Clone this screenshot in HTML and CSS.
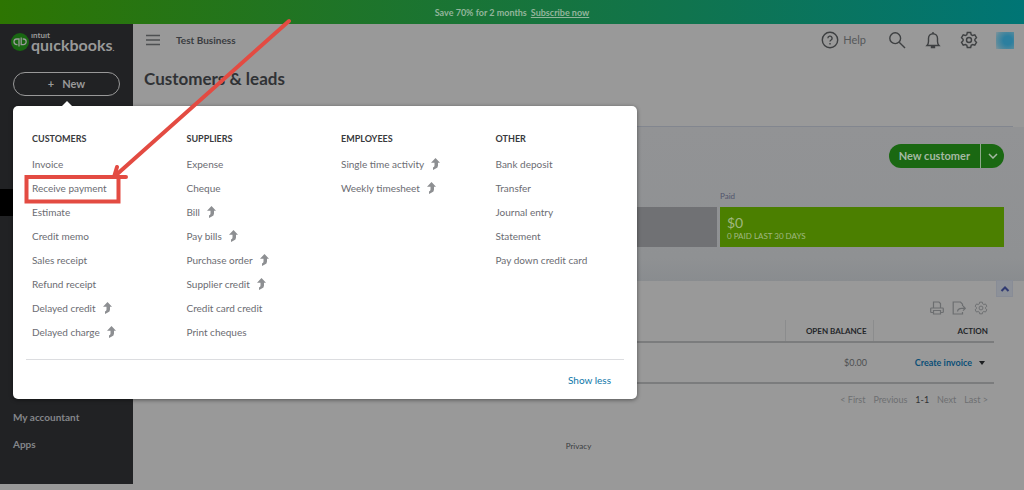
FILE: index.html
```html
<!DOCTYPE html>
<html lang="en">
<head>
<meta charset="utf-8">
<title>Customers &amp; leads</title>
<link rel="stylesheet" href="styles.css">
</head>
<body>
<svg class="defs" aria-hidden="true">
  <symbol id="upgrade" viewBox="0 0 10 12">
    <path d="M5.500 0 10 4.800H8v2.700q0 2.300-2.200 3L3 12V9.500q1.500-.6 1.500-2V4.800H1z"/>
  </symbol>
  <symbol id="gear" viewBox="0 0 18 18">
    <path d="M7.300 1.500h3.400l.5 2.200 1.400.8 2.200-.7 1.700 2.900L14.900 8.200v1.600l1.600 1.500-1.700 2.900-2.200-.7-1.400.8-.5 2.200H7.300l-.5-2.200-1.400-.8-2.200.7-1.700-2.900 1.600-1.500V8.200L1.500 6.700l1.700-2.900 2.200.7 1.400-.8z"/>
    <circle cx="9" cy="9" r="2.500"/>
  </symbol>
</svg>
<div class="promo"><span>Save 70% for 2 months</span><a href="#">Subscribe now</a></div>
<div class="app">
  <aside class="sidebar">
    <div class="brand">
      <svg class="brand-mark" viewBox="0 0 18 18" aria-hidden="true">
        <circle cx="9" cy="9" r="9" fill="#196712"/>
        <g fill="none" stroke="#999" stroke-width="1.300">
          <path d="M8 13.500V6H5.800a2.800 2.800 0 0 0 0 5.600h.7"/>
          <path d="M10.200 4.500v7.100h2.200a2.800 2.800 0 0 0 0-5.600h-.7"/>
        </g>
      </svg>
      <div class="brand-name"><span class="brand-top">ıntuıt</span><span class="brand-main">quıckbooks<i>.</i></span></div>
    </div>
    <button class="new-button" type="button"><span class="plus">+</span>New</button>
    <nav class="nav">
      <span class="nav-active"></span>
      <a href="#">My accountant</a>
      <a href="#">Apps</a>
    </nav>
  </aside>
  <main class="main">
    <header class="topbar">
      <button class="icon-button" type="button" aria-label="Menu">
        <svg class="burger" viewBox="0 0 14 12"><path d="M0 1.500h14M0 6h14M0 10.500h14"/></svg>
      </button>
      <span class="company">Test Business</span>
      <div class="tools">
        <button class="icon-button help" type="button">
          <svg class="tool-icon" viewBox="0 0 18 18"><circle cx="9" cy="9" r="7.700"/><path d="M6.900 7.300a2.100 2.100 0 1 1 3.200 1.700c-.8.5-1.100.8-1.100 1.600"/><path d="M9 12v1.400"/></svg>
          Help
        </button>
        <button class="icon-button" type="button" aria-label="Search">
          <svg class="tool-icon" viewBox="0 0 18 18"><circle cx="7.200" cy="7.200" r="5.400"/><path d="m11.200 11.200 5.800 5.800"/></svg>
        </button>
        <button class="icon-button" type="button" aria-label="Notifications">
          <svg class="tool-icon" viewBox="0 0 18 18"><path d="M3 14.500h12c-1.300-1.300-1.500-2.200-1.500-4V7.300a4.500 4.500 0 0 0-9 0v3.200c0 1.800-.2 2.700-1.500 4zM9 1v2M7.500 15.500h3v1h-3z"/></svg>
        </button>
        <button class="icon-button" type="button" aria-label="Settings">
          <svg class="tool-icon"><use href="#gear"/></svg>
        </button>
        <span class="avatar"></span>
      </div>
    </header>
    <h1 class="title">Customers &amp; leads</h1>
    <section class="summary">
      <div class="summary-actions">
        <div class="split">
          <button class="split-main" type="button">New customer</button>
          <button class="split-more" type="button" aria-label="More options"><svg viewBox="0 0 10 6"><path d="m1 1 4 4 4-4"/></svg></button>
        </div>
      </div>
      <div class="money">
        <div class="open"><div class="bar"></div></div>
        <div class="paid">
          <div class="money-label">Paid</div>
          <div class="bar bar-paid"><strong>$0</strong><span>0 PAID LAST 30 DAYS</span></div>
        </div>
      </div>
      <button class="collapse" type="button" aria-label="Collapse"><svg viewBox="0 0 10 6"><path d="m1.500 5 3.500-3.500L8.500 5"/></svg></button>
    </section>
    <section class="list">
      <div class="list-tools">
        <button class="icon-button" type="button" aria-label="Print"><svg class="list-icon" viewBox="0 0 14 14"><path d="M3.500 7V1h5.500l1.500 1.500V7M3 11.500H1.500q-.8 0-.8-.8V7.800q0-.8.8-.8h11q.8 0 .8.800v2.900q0 .8-.8.8H11M3.500 9.500h7V13h-7z"/></svg></button>
        <button class="icon-button" type="button" aria-label="Export"><svg class="list-icon" viewBox="0 0 14 14"><path d="M10.500 5V3.200L8.500 1H1.200v12h9.300v-2M5.500 10.500c.3-2.300 1.500-3.200 4-3.200h3.500M11 5l2.300 2.300L11 9.600"/></svg></button>
        <button class="icon-button" type="button" aria-label="Table settings"><svg class="list-icon"><use href="#gear"/></svg></button>
      </div>
      <table class="table">
        <thead><tr><th></th><th class="col-balance">OPEN BALANCE</th><th class="col-action">ACTION</th></tr></thead>
        <tbody><tr><td></td><td class="amount">$0.00</td><td><div class="action"><a href="#">Create invoice</a><button class="icon-button caret" type="button" aria-label="More actions"></button></div></td></tr></tbody>
      </table>
      <div class="pager"><span>&lt; First</span><span>Previous</span><span class="current">1-1</span><span>Next</span><span>Last &gt;</span></div>
    </section>
    <footer class="footer"><a href="#">Privacy</a></footer>
  </main>
</div>
<div class="menu">
  <div class="columns">
    <section>
      <h2>CUSTOMERS</h2>
      <ul>
        <li><a href="#">Invoice</a></li>
        <li><a href="#">Receive payment</a></li>
        <li><a href="#">Estimate</a></li>
        <li><a href="#">Credit memo</a></li>
        <li><a href="#">Sales receipt</a></li>
        <li><a href="#">Refund receipt</a></li>
        <li><a href="#">Delayed credit</a><svg><use href="#upgrade"/></svg></li>
        <li><a href="#">Delayed charge</a><svg><use href="#upgrade"/></svg></li>
      </ul>
    </section>
    <section>
      <h2>SUPPLIERS</h2>
      <ul>
        <li><a href="#">Expense</a></li>
        <li><a href="#">Cheque</a></li>
        <li><a href="#">Bill</a><svg><use href="#upgrade"/></svg></li>
        <li><a href="#">Pay bills</a><svg><use href="#upgrade"/></svg></li>
        <li><a href="#">Purchase order</a><svg><use href="#upgrade"/></svg></li>
        <li><a href="#">Supplier credit</a><svg><use href="#upgrade"/></svg></li>
        <li><a href="#">Credit card credit</a></li>
        <li><a href="#">Print cheques</a></li>
      </ul>
    </section>
    <section>
      <h2>EMPLOYEES</h2>
      <ul>
        <li><a href="#">Single time activity</a><svg><use href="#upgrade"/></svg></li>
        <li><a href="#">Weekly timesheet</a><svg><use href="#upgrade"/></svg></li>
      </ul>
    </section>
    <section>
      <h2>OTHER</h2>
      <ul>
        <li><a href="#">Bank deposit</a></li>
        <li><a href="#">Transfer</a></li>
        <li><a href="#">Journal entry</a></li>
        <li><a href="#">Statement</a></li>
        <li><a href="#">Pay down credit card</a></li>
      </ul>
    </section>
  </div>
  <div class="menu-foot"><button type="button">Show less</button></div>
</div>
<svg class="callout" viewBox="0 0 300 210" aria-hidden="true">
  <path d="M26.500 177h92v24.500h-92z"/>
  <path d="M289 21 115 176M117 167l-3 10h12" stroke-linecap="round" stroke-linejoin="round"/>
</svg>
</body>
</html>
```

FILE: styles.css
```css
* { box-sizing: border-box; }
body {
  margin: 0;
  min-height: 100vh;
  display: flex;
  flex-direction: column;
  position: relative;
  background: #999;
  color: #3a3c3f;
  font-family: Lato, "Noto Sans", sans-serif;
  font-size: 10px;
  line-height: 12px;
}
a { color: inherit; text-decoration: none; }
button { font: inherit; color: inherit; border: 0; padding: 0; background: none; }
svg { display: block; }
h1, h2, ul { margin: 0; padding: 0; }
.defs { position: absolute; width: 0; height: 0; }

.promo {
  height: 24px;
  display: flex;
  align-items: center;
  justify-content: center;
  gap: 4px;
  padding-top: 2px;
  background: linear-gradient(90deg, #2d7502, #10744e 67%, #007575);
  color: #93b59c;
  font-size: 9px;
  font-weight: 700;
}
.promo a { text-decoration: underline; }

.app { flex: 1; display: flex; }
.sidebar {
  width: 133px;
  margin-bottom: 6px;
  background: #212224;
  color: #84868a;
  display: flex;
  flex-direction: column;
}
.brand { display: flex; align-items: center; gap: 2px; height: 36px; padding-left: 11px; }
.brand-mark { width: 18px; height: 18px; }
.brand-name { color: #999; font-weight: 700; display: flex; flex-direction: column; }
.brand-top { font-size: 8px; line-height: 8px; }
.brand-main { font-size: 16px; line-height: 12px; }
.brand-main i { font-size: 8px; font-style: normal; }
.new-button {
  margin: 12px 13px 0;
  height: 24px;
  border: 1px solid #999;
  border-radius: 12px;
  color: #999;
  font-size: 11px;
  font-weight: 700;
}
.plus { margin-right: 8px; }
.nav { margin-top: 93px; display: flex; flex-direction: column; font-weight: 700; }
.nav-active { height: 27px; margin-bottom: 188px; background: #000; }
.nav a { padding: 7px 13px 8px; }

.main { flex: 1; min-width: 0; display: flex; flex-direction: column; }
.topbar { display: flex; align-items: center; height: 32px; padding: 0 10px 0 13px; }
.icon-button { display: flex; align-items: center; }
.burger { width: 14px; height: 12px; fill: none; stroke: #4e5052; stroke-width: 1.5; }
.company { margin-left: 16px; font-weight: 700; }
.tools { margin-left: auto; display: flex; align-items: center; gap: 18px; color: #55585a; }
.tool-icon { width: 18px; height: 18px; fill: none; stroke: #3e4042; stroke-width: 1.4; }
.help { gap: 4px; font-size: 11px; margin-right: 4px; }
.avatar { width: 18px; height: 17px; background: radial-gradient(circle at 65% 50%, #2c7f9f 30%, #5b8b9c 75%, #83939a); }
.title { margin: 12px 11px 0; height: 59px; font-size: 17px; line-height: 22px; border-bottom: 1px solid #82868f; color: #303235; }

.summary { position: relative; height: 154px; padding: 17px 20px 34px 11px; background: linear-gradient(#929395, #8f9193 85%, #898c8f); }
.summary-actions { display: flex; justify-content: flex-end; }
.split { display: flex; height: 24px; border-radius: 12px; overflow: hidden; background: #1a6812; color: #a5b9a3; }
.split-main { padding: 0 10px; font-size: 11px; font-weight: 700; }
.split-more { width: 24px; border-left: 1px solid #8ea98b; display: grid; place-items: center; }
.split-more svg { width: 10px; height: 6px; fill: none; stroke: #a5b9a3; stroke-width: 1.5; }
.money { display: grid; grid-template-columns: 573fr 284fr; gap: 3px; align-items: end; margin-top: 22px; }
.money-label { color: #51556d; font-size: 8px; margin-bottom: 5px; }
.bar { height: 40px; background: #707174; }
.bar-paid { background: #4b7f00; padding: 7px; color: #a0b880; display: flex; flex-direction: column; }
.bar-paid strong { font-size: 14px; line-height: 17px; font-weight: 400; }
.bar-paid span { font-size: 8px; line-height: 10px; }
.collapse { position: absolute; right: 11px; bottom: -16px; width: 17px; height: 17px; display: grid; place-items: center; background: #8d9199; border: 1px solid #888c96; }
.collapse svg { width: 10px; height: 6px; fill: none; stroke: #303a72; stroke-width: 2; }

.list { padding: 20px 30px 0 11px; }
.list-tools { display: flex; justify-content: flex-end; gap: 8px; padding-right: 6px; }
.list-icon { width: 14px; height: 14px; fill: none; stroke: #6c6e70; stroke-width: 1.2; }
.table { width: 100%; border-collapse: collapse; margin-top: 5px; table-layout: fixed; }
.table th { height: 22px; padding: 0 6px; text-align: right; font-size: 8px; color: #242629; border-bottom: 2px solid #7b7c7d; }
.table .col-balance { width: 88px; border-left: 1px solid #8b8c8d; border-right: 1px solid #8b8c8d; white-space: nowrap; }
.col-action { width: 121px; }
.table td { height: 41px; padding: 0 6px; border-bottom: 2px solid #7b7c7d; }
.table .amount { text-align: right; color: #4d4f51; font-size: 9px; }
.action { display: flex; align-items: center; justify-content: flex-end; gap: 7px; padding-right: 3px; color: #0b4f77; font-size: 9px; font-weight: 700; }
.caret { border: 3px solid transparent; border-top: 4px solid #1d1f21; border-bottom: 0; }
.pager { display: flex; justify-content: flex-end; gap: 8px; padding: 10px 6px 0; font-size: 9px; color: #6d6f71; }
.current { color: #303234; }
.footer { margin-top: 34px; text-align: center; font-size: 8px; }

.menu {
  position: absolute;
  left: 13px;
  top: 106px;
  width: 624px;
  padding: 27px 13px 0;
  background: #fff;
  border-radius: 5px;
  box-shadow: 0 1px 4px rgba(0, 0, 0, .45);
  color: #6b6c72;
}
.menu::before {
  content: "";
  position: absolute;
  left: 49px;
  top: -5px;
  border: 5px solid transparent;
  border-top: 0;
  border-bottom-color: #fff;
}
.columns { display: grid; grid-template-columns: repeat(4, 1fr); padding: 0 0 15px 6px; margin-right: -26px; }
.columns h2 { font-size: 9px; line-height: 12px; color: #393a3d; margin-bottom: 7px; }
.columns ul { list-style: none; }
.columns li { display: flex; align-items: center; gap: 6px; height: 24px; }
.columns li svg { width: 10px; height: 12px; fill: #8d8f92; }
.menu-foot { display: flex; justify-content: flex-end; height: 40px; padding-right: 13px; border-top: 1px solid #dcdde0; }
.menu-foot button { color: #0e77a8; font-size: 10px; }

.callout { position: absolute; left: 0; top: 0; width: 300px; height: 210px; fill: none; stroke: #e34b42; stroke-width: 4; pointer-events: none; }
```
